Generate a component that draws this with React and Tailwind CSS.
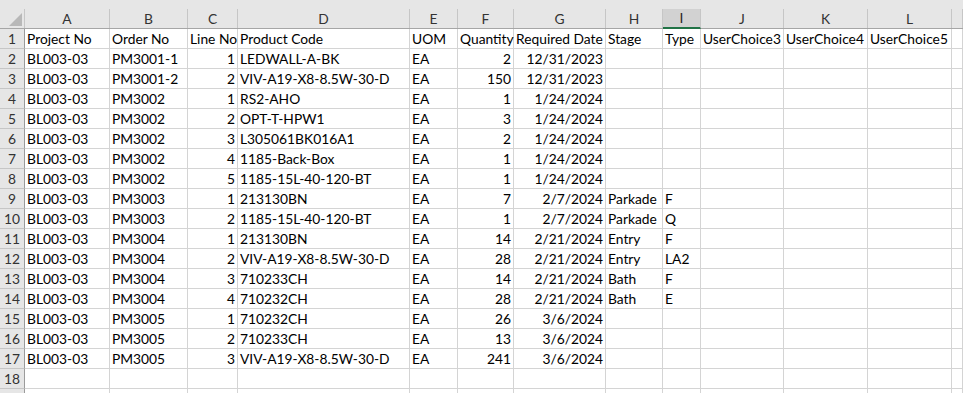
import React from "react";

const cols = ["A", "B", "C", "D", "E", "F", "G", "H", "I", "J", "K", "L", ""];
const gridCols =
  "grid grid-cols-[25px_85px_78px_50px_172px_48px_56px_92px_57px_38px_83px_84px_84px_1fr]";

const header = [
  "Project No",
  "Order No",
  "Line No",
  "Product Code",
  "UOM",
  "Quantity",
  "Required Date",
  "Stage",
  "Type",
  "UserChoice3",
  "UserChoice4",
  "UserChoice5",
];

// project, order, line, code, uom, qty, date, stage, type
const rows = [
  ["BL003-03", "PM3001-1", 1, "LEDWALL-A-BK", "EA", 2, "12/31/2023", "", ""],
  ["BL003-03", "PM3001-2", 2, "VIV-A19-X8-8.5W-30-D", "EA", 150, "12/31/2023", "", ""],
  ["BL003-03", "PM3002", 1, "RS2-AHO", "EA", 1, "1/24/2024", "", ""],
  ["BL003-03", "PM3002", 2, "OPT-T-HPW1", "EA", 3, "1/24/2024", "", ""],
  ["BL003-03", "PM3002", 3, "L305061BK016A1", "EA", 2, "1/24/2024", "", ""],
  ["BL003-03", "PM3002", 4, "1185-Back-Box", "EA", 1, "1/24/2024", "", ""],
  ["BL003-03", "PM3002", 5, "1185-15L-40-120-BT", "EA", 1, "1/24/2024", "", ""],
  ["BL003-03", "PM3003", 1, "213130BN", "EA", 7, "2/7/2024", "Parkade", "F"],
  ["BL003-03", "PM3003", 2, "1185-15L-40-120-BT", "EA", 1, "2/7/2024", "Parkade", "Q"],
  ["BL003-03", "PM3004", 1, "213130BN", "EA", 14, "2/21/2024", "Entry", "F"],
  ["BL003-03", "PM3004", 2, "VIV-A19-X8-8.5W-30-D", "EA", 28, "2/21/2024", "Entry", "LA2"],
  ["BL003-03", "PM3004", 3, "710233CH", "EA", 14, "2/21/2024", "Bath", "F"],
  ["BL003-03", "PM3004", 4, "710232CH", "EA", 28, "2/21/2024", "Bath", "E"],
  ["BL003-03", "PM3005", 1, "710232CH", "EA", 26, "3/6/2024", "", ""],
  ["BL003-03", "PM3005", 2, "710233CH", "EA", 13, "3/6/2024", "", ""],
  ["BL003-03", "PM3005", 3, "VIV-A19-X8-8.5W-30-D", "EA", 241, "3/6/2024", "", ""],
];

const RowNum = ({ n }) => (
  <div className="h-5 bg-[#e6e6e6] border-r border-r-[#9b9b9b] border-b border-b-[#c6c6c6] flex items-center justify-center text-[#333]">
    {n}
  </div>
);

const Cell = ({ v, right }) => (
  <div
    className={
      "h-5 border-r border-b border-[#d4d4d4] flex items-center px-[2px] whitespace-nowrap overflow-visible " +
      (right ? "justify-end" : "justify-start")
    }
  >
    {v}
  </div>
);

export default function App() {
  return (
    <div className="w-[963px] h-[393px] overflow-hidden bg-white text-black font-['Lato','Liberation_Sans',sans-serif] text-[13.8px] leading-none">
      {/* column header strip */}
      <div className="h-[9px] bg-[#e6e6e6]" />
      <div className={gridCols + " h-[20px] bg-[#e6e6e6] border-b border-[#a6a6a6]"}>
        <div className="relative border-r border-[#c6c6c6]">
          <div className="absolute right-[2px] bottom-[2px] w-0 h-0 border-l-[13px] border-l-transparent border-b-[13px] border-b-[#b8b8b8]" />
        </div>
        {cols.map((c, i) =>
          c === "I" ? (
            <div
              key={i}
              className="bg-[#d2d2d2] border-r border-[#c6c6c6] border-b-2 border-b-[#217346] -mb-px flex items-center justify-center text-[#262626]"
            >
              {c}
            </div>
          ) : (
            <div
              key={i}
              className="border-r border-[#c6c6c6] flex items-center justify-center text-[#333]"
            >
              {c}
            </div>
          )
        )}
      </div>

      {/* header row */}
      <div className={gridCols}>
        <RowNum n={1} />
        {header.map((h, i) => (
          <Cell key={i} v={h} />
        ))}
        <Cell v="" />
      </div>

      {rows.map((r, idx) => (
        <div key={idx} className={gridCols}>
          <RowNum n={idx + 2} />
          <Cell v={r[0]} />
          <Cell v={r[1]} />
          <Cell v={r[2]} right />
          <Cell v={r[3]} />
          <Cell v={r[4]} />
          <Cell v={r[5]} right />
          <Cell v={r[6]} right />
          <Cell v={r[7]} />
          <Cell v={r[8]} />
          <Cell v="" />
          <Cell v="" />
          <Cell v="" />
          <Cell v="" />
        </div>
      ))}

      <div className={gridCols}>
        <RowNum n={18} />
        {cols.map((c, i) => (
          <Cell key={i} v="" />
        ))}
      </div>
      <div className={gridCols}>
        <RowNum n="" />
        {cols.map((c, i) => (
          <Cell key={i} v="" />
        ))}
      </div>
    </div>
  );
}
